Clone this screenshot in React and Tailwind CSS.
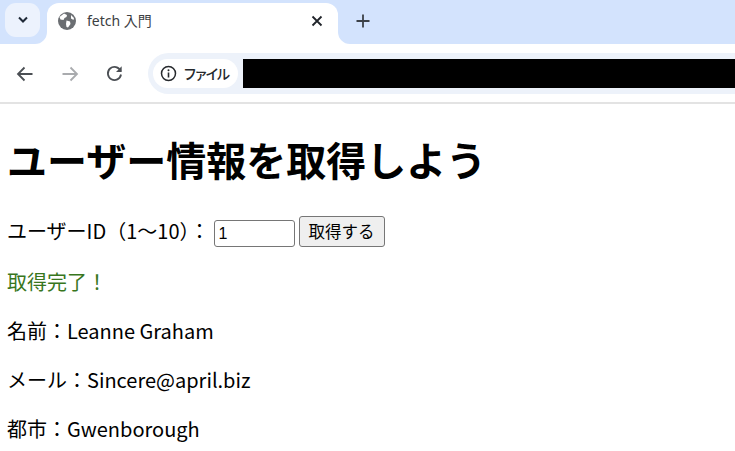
import React from "react";

const cjk = "font-['Noto_Sans_CJK_JP',sans-serif]";

function Flare({ side }) {
  return (
    <svg className={side === "l" ? "absolute left-[-12px] bottom-0" : "absolute right-[-12px] bottom-0"} width="12" height="12" viewBox="0 0 12 12">
      <path d={side === "l" ? "M12 0V12H0A12 12 0 0 0 12 0Z" : "M0 0V12H12A12 12 0 0 1 0 0Z"} fill="#ffffff" />
    </svg>
  );
}

export default function App() {
  return (
    <div className="w-[735px] h-[451px] overflow-hidden bg-white text-black font-['Noto_Sans',sans-serif]">
      <div className="h-[44px] bg-[#d3e3fd] flex items-start">
        <div className="ml-[5px] mt-[3px] w-[35px] h-[34px] rounded-[11px] bg-[#ecf2fd] flex items-center justify-center">
          <svg width="12" height="8" viewBox="0 0 12 8"><path d="M2 1.5L6 5.5L10 1.5" fill="none" stroke="#1f2937" strokeWidth="2" /></svg>
        </div>
        <div className="relative ml-[7px] mt-[3px] w-[291px] h-[41px] bg-white rounded-t-[12px] flex items-center pl-[11px] pr-[15px] pb-[6px]">
          <Flare side="l" />
          <Flare side="r" />
          <svg width="18" height="18" viewBox="0 0 18 18">
            <circle cx="9" cy="9" r="9" fill="#6b6e72" />
            <path d="M6 1.5L9 3L8.5 5L6.5 6L5.5 8L2.5 7.5L1.5 5ZM8.5 8.5L12 9.5L12.5 12L10 15.5L8.5 15L8 12ZM13 3L16 6L15.5 8L13 6.5Z" fill="#ffffff" />
          </svg>
          <span className="ml-[11px] text-[14px] text-[#3c4043] font-['Noto_Sans','Noto_Sans_CJK_JP',sans-serif]">fetch 入門</span>
          <svg className="ml-auto" width="12" height="12" viewBox="0 0 12 12"><path d="M1.5 1.5L10.5 10.5M10.5 1.5L1.5 10.5" stroke="#20242a" strokeWidth="1.8" /></svg>
        </div>
        <svg className="ml-[18px] mt-[14px]" width="14" height="14" viewBox="0 0 14 14"><path d="M7 0.5V13.5M0.5 7H13.5" stroke="#3c4148" strokeWidth="1.8" /></svg>
      </div>

      <div className="h-[60px] bg-white border-b-2 border-[#e3e3e3] flex items-center pt-[1px]">
        <svg className="ml-[16px]" width="18" height="16" viewBox="0 0 18 16"><path d="M16.5 8H2.5M8.5 1.5L2 8L8.5 14.5" fill="none" stroke="#4b4f54" strokeWidth="1.8" /></svg>
        <svg className="ml-[27px]" width="18" height="16" viewBox="0 0 18 16"><path d="M1.5 8H15.5M9.5 1.5L16 8L9.5 14.5" fill="none" stroke="#a9abae" strokeWidth="1.8" /></svg>
        <svg className="ml-[27px]" width="17" height="17" viewBox="0 0 17 17"><path d="M14.6 6A6.6 6.6 0 1 0 15 9.5" fill="none" stroke="#4b4f54" strokeWidth="1.8" /><path d="M15.7 1.2V7H10Z" fill="#4b4f54" /></svg>
        <div className="ml-[25px] flex-1 h-[41px] rounded-l-full bg-[#edf2fa] flex items-center pl-[5px]">
          <div className="w-[85px] h-[29px] rounded-full bg-white flex items-center pl-[7px]">
            <svg width="17" height="17" viewBox="0 0 17 17" className="shrink-0">
              <circle cx="8.5" cy="8.5" r="7" fill="none" stroke="#26292d" strokeWidth="1.5" />
              <path d="M8.5 7.5V12.5" stroke="#26292d" strokeWidth="1.6" />
              <circle cx="8.5" cy="5.2" r="1" fill="#26292d" />
            </svg>
            <span className={`ml-[6px] text-[14px] font-medium tracking-[-2.9px] text-[#26292d] whitespace-nowrap ${cjk}`}>ファイル</span>
          </div>
          <div className="ml-[5px] flex-1 h-[29px] bg-black" />
        </div>
      </div>

      <div className={`px-[7px] text-[20px] ${cjk}`}>
        <h1 className="text-[40px] font-bold leading-[58px] mt-[26px] mb-0">ユーザー情報を取得しよう</h1>
        <div className="flex items-end mt-[28px] h-[31px]">
          <span className="leading-[29px] mb-[2px]">ユーザーID（1〜10）：</span>
          <input
            readOnly
            value="1"
            className="ml-[4px] w-[81px] h-[27px] border border-[#767676] rounded-[3px] bg-white px-[4px] text-[16px] font-['Liberation_Sans',sans-serif] outline-none"
          />
          <button className="ml-[4px] w-[86px] h-[31px] border border-[#767676] rounded-[3px] bg-[#efefef] text-[16.5px] leading-none">取得する</button>
        </div>
        <p className="mt-[20px] leading-[29px] text-[#38761d]">取得完了！</p>
        <p className="mt-[20px] leading-[29px]">名前：Leanne Graham</p>
        <p className="mt-[20px] leading-[29px]">メール：Sincere@april.biz</p>
        <p className="mt-[20px] leading-[29px]">都市：Gwenborough</p>
      </div>
    </div>
  );
}
